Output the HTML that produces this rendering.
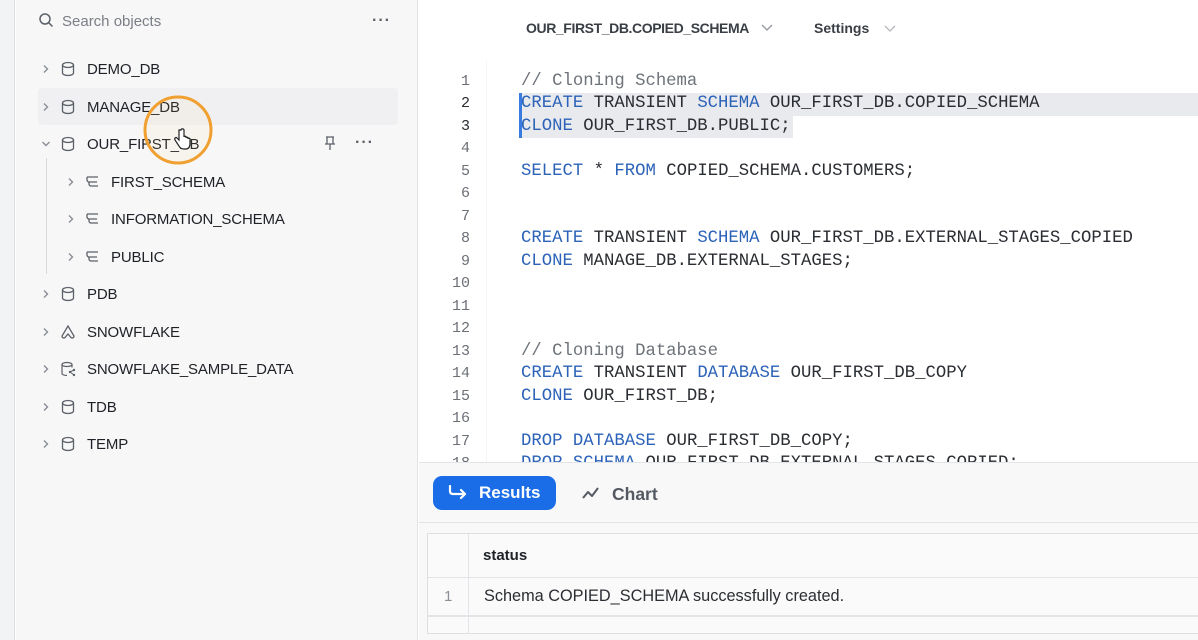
<!DOCTYPE html>
<html><head><style>
*{margin:0;padding:0;box-sizing:border-box}
body{width:1198px;height:640px;overflow:hidden;background:#fff;font-family:"Liberation Sans",sans-serif;position:relative}
.strip{position:absolute;left:0;top:0;width:15px;height:640px;background:#f2f3f4;border-right:1px solid #dcdde0}
.side{position:absolute;left:16px;top:0;width:402px;height:640px;background:#f7f7f8;border-right:1px solid #e2e3e6}
.row{position:absolute;height:30px;display:flex;align-items:center;font-size:15px;color:#1e2126}
.row svg{flex:none}
.ic{width:14px;display:flex;justify-content:center}
.hl{position:absolute;left:22px;top:88px;width:360px;height:37px;background:#f0f0f2;border-radius:4px}
.ed{position:absolute;left:419px;top:0;width:779px;height:462px;background:#fff}
.ln{position:absolute;left:430px;width:40px;text-align:right;font-family:"Liberation Mono",monospace;font-size:15px;color:#6b6f76;height:22.5px;line-height:22.5px}
.cd{position:absolute;left:521px;font-family:"Liberation Mono",monospace;font-size:17.3px;color:#2a2d32;height:22.5px;line-height:22.5px;white-space:pre}
.k{color:#2c63b8}.c{color:#6e737a}
.bot{position:absolute;left:419px;top:462px;width:779px;height:178px;background:#f8f8f9;border-top:1px solid #e3e4e7}
</style></head><body>
<div class="strip"></div>
<div class="side">
<div class="hl"></div>
</div>
<svg style="position:absolute;left:38px;top:12px" width="17" height="17" viewBox="0 0 17 17"><circle cx="7" cy="7" r="5" fill="none" stroke="#5d6169" stroke-width="1.5"/><path d="M10.7 10.7L14.5 14.5" stroke="#5d6169" stroke-width="1.5"/></svg>
<div style="position:absolute;left:62px;top:13px;font-size:15px;color:#7a7e85">Search objects</div>
<div style="position:absolute;left:372px;top:12px;font-size:16px;color:#5d6169;letter-spacing:1px;font-weight:bold">···</div>
<div style="position:absolute;left:46px;top:158px;width:1px;height:116px;background:#d8d9dc"></div>

<div id="rows"></div>
<script>
const db='<svg width="14" height="16" viewBox="0 0 14 16"><ellipse cx="7" cy="4" rx="5.5" ry="2.5" fill="none" stroke="#5d6169" stroke-width="1.3"/><path d="M1.5 4v8c0 1.4 2.5 2.5 5.5 2.5s5.5-1.1 5.5-2.5V4" fill="none" stroke="#5d6169" stroke-width="1.3"/></svg>';
const sc='<svg width="16" height="14" viewBox="0 0 16 14"><path d="M2 2h11M2 2v3c0 1 1 2 2 2h8M4 7v2c0 1 1 2 2 2h7" fill="none" stroke="#5d6169" stroke-width="1.3"/></svg>';
const sf='<svg width="16" height="16" viewBox="0 0 16 16"><path d="M8 2L2 12c0 2 2 2.5 3 1.5L8 10l3 3.5c1 1 3 .5 3-1.5z" fill="none" stroke="#5d6169" stroke-width="1.3"/></svg>';
const sh='<svg width="16" height="16" viewBox="0 0 16 16"><ellipse cx="7" cy="3.5" rx="5" ry="2" fill="none" stroke="#5d6169" stroke-width="1.2"/><path d="M2 3.5v9c0 1 2 2 5 2M12 3.5v3" fill="none" stroke="#5d6169" stroke-width="1.2"/><circle cx="10" cy="11" r="1.2" fill="#5d6169"/><circle cx="14" cy="9" r="1.2" fill="#5d6169"/><circle cx="14" cy="14" r="1.2" fill="#5d6169"/><path d="M10 11l4-2M10 11l4 3" stroke="#5d6169" stroke-width="1"/></svg>';
const chR='<svg width="10" height="10" viewBox="0 0 10 10"><path d="M3 1.5l3.5 3.5L3 8.5" fill="none" stroke="#8a8e95" stroke-width="1.4"/></svg>';
const chD='<svg width="10" height="10" viewBox="0 0 10 10"><path d="M1.5 3l3.5 3.5L8.5 3" fill="none" stroke="#8a8e95" stroke-width="1.4"/></svg>';
const rows=[[68,0,chR,db,'DEMO_DB'],[106,0,chR,db,'MANAGE_DB'],[143,0,chD,db,'OUR_FIRST_DB'],[181,1,chR,sc,'FIRST_SCHEMA'],[218,1,chR,sc,'INFORMATION_SCHEMA'],[256,1,chR,sc,'PUBLIC'],[293,0,chR,db,'PDB'],[331,0,chR,sf,'SNOWFLAKE'],[368,0,chR,sh,'SNOWFLAKE_SAMPLE_DATA'],[406,0,chR,db,'TDB'],[443,0,chR,db,'TEMP']];
let h='';
for(const r of rows){const x=r[1]?66:41;h+=`<div class="row" style="left:${x}px;top:${r[0]-14}px">${r[2]}<span style="width:10px"></span><span class="ic">${r[3]}</span><span style="margin-left:${r[1]?11:12}px;letter-spacing:-0.15px">${r[4]}</span></div>`;}
document.getElementById('rows').innerHTML=h;
</script>
<svg style="position:absolute;left:322px;top:135px" width="16" height="16" viewBox="0 0 16 16"><path d="M4 2h8M5 2v7M11 2v7M3 9h10M8 9v6" fill="none" stroke="#5d6169" stroke-width="1.3"/></svg>
<div style="position:absolute;left:355px;top:134px;font-size:16px;color:#5d6169;letter-spacing:1px;font-weight:bold">···</div>
<svg style="position:absolute;left:140px;top:95px" width="80" height="75" viewBox="0 0 80 75"><circle cx="38" cy="35" r="33" fill="rgba(255,200,120,0.08)" stroke="#f0a030" stroke-width="3"/></svg>
<svg style="position:absolute;left:174px;top:128px" width="18" height="22" viewBox="0 0 18 22"><path d="M5 2v10l-2-2c-1-1-3 0-2 2l4 6c1 2 3 3 5 3h2c3 0 4-3 4-5v-5c0-1-2-1-2 0v-1c0-1-2-1-2 0v-1c0-1-2-1-2 0V2c0-1.5-3-1.5-3 0z" fill="#fff" stroke="#222" stroke-width="1.2"/></svg>

<div class="ed">
<div style="position:absolute;left:67px;top:60px;width:1px;height:402px;background:#f5f5f6"></div>
</div>
<div style="position:absolute;left:526px;top:20px;font-size:14px;color:#3a3e45;font-weight:bold;letter-spacing:-0.4px">OUR_FIRST_DB.COPIED_SCHEMA</div>
<svg style="position:absolute;left:760px;top:22px" width="14" height="12"><path d="M2 3l5 5 5-5" fill="none" stroke="#9a9ea5" stroke-width="1.5"/></svg>
<div style="position:absolute;left:814px;top:20px;font-size:14px;color:#3a3e45;font-weight:bold">Settings</div>
<svg style="position:absolute;left:883px;top:23px" width="14" height="12"><path d="M2 3l5 5 5-5" fill="none" stroke="#b5b8bd" stroke-width="1.3"/></svg>

<div style="position:absolute;left:520px;top:93px;width:678px;height:22.5px;background:#e9eaee"></div>
<div style="position:absolute;left:520px;top:115.5px;width:273px;height:22.5px;background:#e9eaee"></div>
<div style="position:absolute;left:519px;top:93px;width:3px;height:45px;background:#3a7be0"></div>

<div id="code"></div>
<script>
const L=[
'<span class="c">// Cloning Schema</span>',
'<span class="k">CREATE</span> TRANSIENT <span class="k">SCHEMA</span> OUR_FIRST_DB.COPIED_SCHEMA',
'<span class="k">CLONE</span> OUR_FIRST_DB.PUBLIC;',
'',
'<span class="k">SELECT</span> * <span class="k">FROM</span> COPIED_SCHEMA.CUSTOMERS;',
'','',
'<span class="k">CREATE</span> TRANSIENT <span class="k">SCHEMA</span> OUR_FIRST_DB.EXTERNAL_STAGES_COPIED',
'<span class="k">CLONE</span> MANAGE_DB.EXTERNAL_STAGES;',
'','','',
'<span class="c">// Cloning Database</span>',
'<span class="k">CREATE</span> TRANSIENT <span class="k">DATABASE</span> OUR_FIRST_DB_COPY',
'<span class="k">CLONE</span> OUR_FIRST_DB;',
'',
'<span class="k">DROP</span> <span class="k">DATABASE</span> OUR_FIRST_DB_COPY;',
'<span class="k">DROP</span> <span class="k">SCHEMA</span> OUR_FIRST_DB.EXTERNAL_STAGES_COPIED;'];
let s='';
L.forEach((t,i)=>{const y=70.5+i*22.5;s+=`<div class="ln" style="top:${y}px;${i==1||i==2?'color:#2a2d32':''}">${i+1}</div><div class="cd" style="top:${y}px">${t}</div>`;});
document.getElementById('code').innerHTML=s;
</script>

<div class="bot">
<div style="position:absolute;left:14px;top:13px;width:123px;height:34px;background:#1a6de6;border-radius:9px;color:#fff;font-weight:bold;font-size:17px;line-height:34px;padding-left:46px">Results</div>
<svg style="position:absolute;left:28px;top:22px" width="22" height="16" viewBox="0 0 22 16"><path d="M3 1v5c0 2 1 3 3 3h12M14 5l4 4-4 4" fill="none" stroke="#fff" stroke-width="2.2" stroke-linecap="round" stroke-linejoin="round"/></svg>
<svg style="position:absolute;left:162px;top:22px" width="20" height="16" viewBox="0 0 20 16"><path d="M2 13l5-6 4 4 6-8" fill="none" stroke="#555a62" stroke-width="2" stroke-linejoin="round"/></svg>
<div style="position:absolute;left:193px;top:21px;font-size:17.5px;font-weight:bold;color:#555a62">Chart</div>
<div style="position:absolute;left:0;top:59px;width:779px;height:1px;background:#e3e4e7"></div>
<div style="position:absolute;left:8px;top:70px;width:780px;height:101px;background:#fafafa;border:1px solid #dedfe2">
 <div style="position:absolute;left:40px;top:0;width:1px;height:100px;background:#e3e4e7"></div>
 <div style="position:absolute;left:0;top:43px;width:780px;height:1px;background:#e3e4e7"></div>
 <div style="position:absolute;left:0;top:81px;width:780px;height:2px;background:#e3e4e7"></div>
 <div style="position:absolute;left:55px;top:13px;font-size:15px;font-weight:bold;color:#1e2126">status</div>
 <div style="position:absolute;left:16px;top:54px;font-size:15px;color:#8a8e95">1</div>
 <div style="position:absolute;left:56px;top:53px;font-size:16.3px;color:#2a2d32">Schema COPIED_SCHEMA successfully created.</div>
</div>
</div>
</body></html>
